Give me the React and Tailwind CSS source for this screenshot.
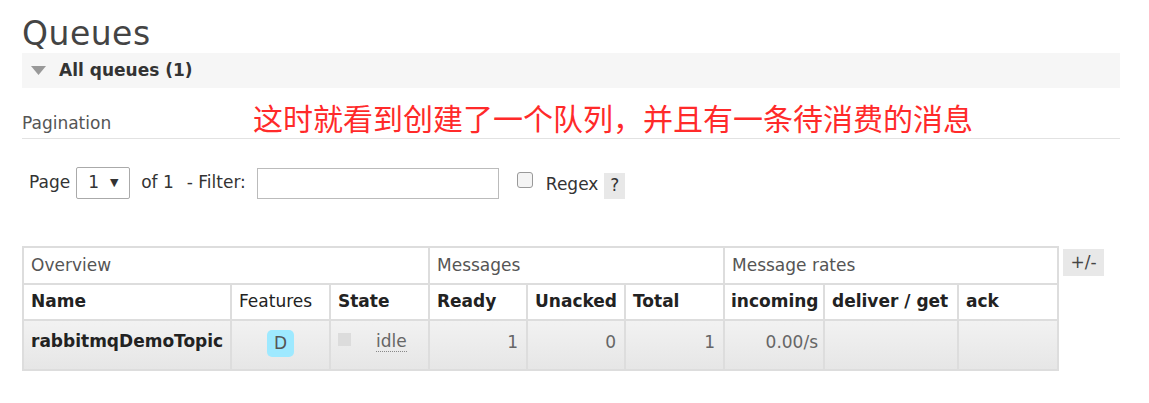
import React from "react";

const font = { fontFamily: '"DejaVu Sans", Verdana, sans-serif' };

const colWidths = ["w-[208px]", "w-[99px]", "w-[99px]", "w-[98px]", "w-[98px]", "w-[99px]", "w-[100px]", "w-[134px]", "w-[100px]"];

const App = () => {
  return (
    <div className="w-[1149px] h-[403px] bg-white text-[#484848] overflow-hidden" style={font}>
      <div className="pl-[22px] pr-[29px]">
        {/* Title */}
        <h1 className="text-[33px] leading-[38px] pt-[15px] text-[#444] tracking-[0.5px]">Queues</h1>

        {/* Section bar */}
        <div className="h-[35px] bg-[#f6f6f6] flex items-center gap-[13px] pl-[9px]">
          <svg width="15" height="9" viewBox="0 0 15 9">
            <polygon points="0,0 15,0 7.5,9" fill="#999" />
          </svg>
          <span className="font-bold text-[17px] text-[#333]">All queues (1)</span>
        </div>

        {/* Pagination header */}
        <div className="h-[51px] flex items-end border-b border-[#e2e2e2] pb-[2px] relative">
          <span className="text-[17px] text-[#555]">Pagination</span>
          <span
            className="absolute left-[231px] top-[12px] text-[30px] leading-[34px] text-[#ff2a2a]"
            style={{ fontFamily: '"Noto Sans CJK SC", sans-serif' }}
          >
            这时就看到创建了一个队列，并且有一条待消费的消息
          </span>
        </div>

        {/* Pagination row */}
        <div className="flex items-center mt-[28px] pl-[7px] text-[17px] text-[#333] h-[32px]">
          <span>Page</span>
          <div className="ml-[6px] w-[54px] h-[32px] border border-[#aaa] rounded-[2px] flex items-center pl-[11px] gap-[11px]">
            <span>1</span>
            <span className="text-[11px]">▼</span>
          </div>
          <span className="ml-[11px]">of 1</span>
          <span className="ml-[13px]">- Filter:</span>
          <div className="ml-[11px] w-[242px] h-[31px] border border-[#bbb]" />
          <div className="ml-[18px] w-[16px] h-[16px] border border-[#999] rounded-[3px] bg-[#f4f4f4] -mt-[6px]" />
          <span className="ml-[13px] mt-[4px]">Regex</span>
          <span className="ml-[6px] mt-[6px] w-[21px] h-[26px] bg-[#e8e8e8] flex items-center justify-center">?</span>
        </div>

        {/* Table */}
        <div className="flex items-start mt-[47px]">
          <table className="border-collapse table-fixed w-[1035px] text-[17px]">
            <colgroup>
              {colWidths.map((w, i) => (
                <col key={i} className={w} />
              ))}
            </colgroup>
            <thead>
              <tr className="h-[37px]">
                <th colSpan={3} className="border-2 border-[#ddd] text-left font-normal px-[7px] text-[#555]">Overview</th>
                <th colSpan={3} className="border-2 border-[#ddd] text-left font-normal px-[7px] text-[#555]">Messages</th>
                <th colSpan={3} className="border-2 border-[#ddd] text-left font-normal px-[7px] text-[#555]">Message rates</th>
              </tr>
              <tr className="h-[36px] text-[#222] whitespace-nowrap">
                <th className="border-2 border-[#ddd] text-left px-[7px]">Name</th>
                <th className="border-2 border-[#ddd] text-left px-[7px] font-normal">Features</th>
                <th className="border-2 border-[#ddd] text-left px-[7px]">State</th>
                <th className="border-2 border-[#ddd] text-left px-[7px]">Ready</th>
                <th className="border-2 border-[#ddd] text-left px-[7px]">Unacked</th>
                <th className="border-2 border-[#ddd] text-left px-[7px]">Total</th>
                <th className="border-2 border-[#ddd] text-left px-[6px]">incoming</th>
                <th className="border-2 border-[#ddd] text-left px-[7px]">deliver / get</th>
                <th className="border-2 border-[#ddd] text-left px-[7px]">ack</th>
              </tr>
            </thead>
            <tbody>
              <tr className="h-[50px] bg-gradient-to-b from-[#f2f2f2] to-[#e6e6e6] align-top text-[#666]">
                <td className="border-2 border-[#ddd] px-[7px] pt-[8px] font-bold text-[#222] whitespace-nowrap">rabbitmqDemoTopic</td>
                <td className="border-2 border-[#ddd] pt-[9px]">
                  <div className="flex justify-center">
                    <span className="w-[27px] h-[27px] rounded-[5px] bg-[#9ee9ff] text-[#555] flex items-center justify-center">D</span>
                  </div>
                </td>
                <td className="border-2 border-[#ddd] px-[7px] pt-[10px]">
                  <div className="flex items-start">
                    <span className="w-[13px] h-[13px] bg-[#dcdcdc] mt-[2px]" />
                    <span className="ml-[25px] border-b border-dotted border-[#888] leading-[20px]">idle</span>
                  </div>
                </td>
                <td className="border-2 border-[#ddd] px-[8px] pt-[9px] text-right">1</td>
                <td className="border-2 border-[#ddd] px-[8px] pt-[9px] text-right">0</td>
                <td className="border-2 border-[#ddd] px-[8px] pt-[9px] text-right">1</td>
                <td className="border-2 border-[#ddd] px-[5px] pt-[9px] text-right">0.00/s</td>
                <td className="border-2 border-[#ddd]" />
                <td className="border-2 border-[#ddd]" />
              </tr>
            </tbody>
          </table>
          <span className="ml-[4px] mt-[3px] w-[41px] h-[27px] bg-[#e8e8e8] flex items-center justify-center text-[17px] text-[#444]">+/-</span>
        </div>
      </div>
    </div>
  );
};

export default App;
